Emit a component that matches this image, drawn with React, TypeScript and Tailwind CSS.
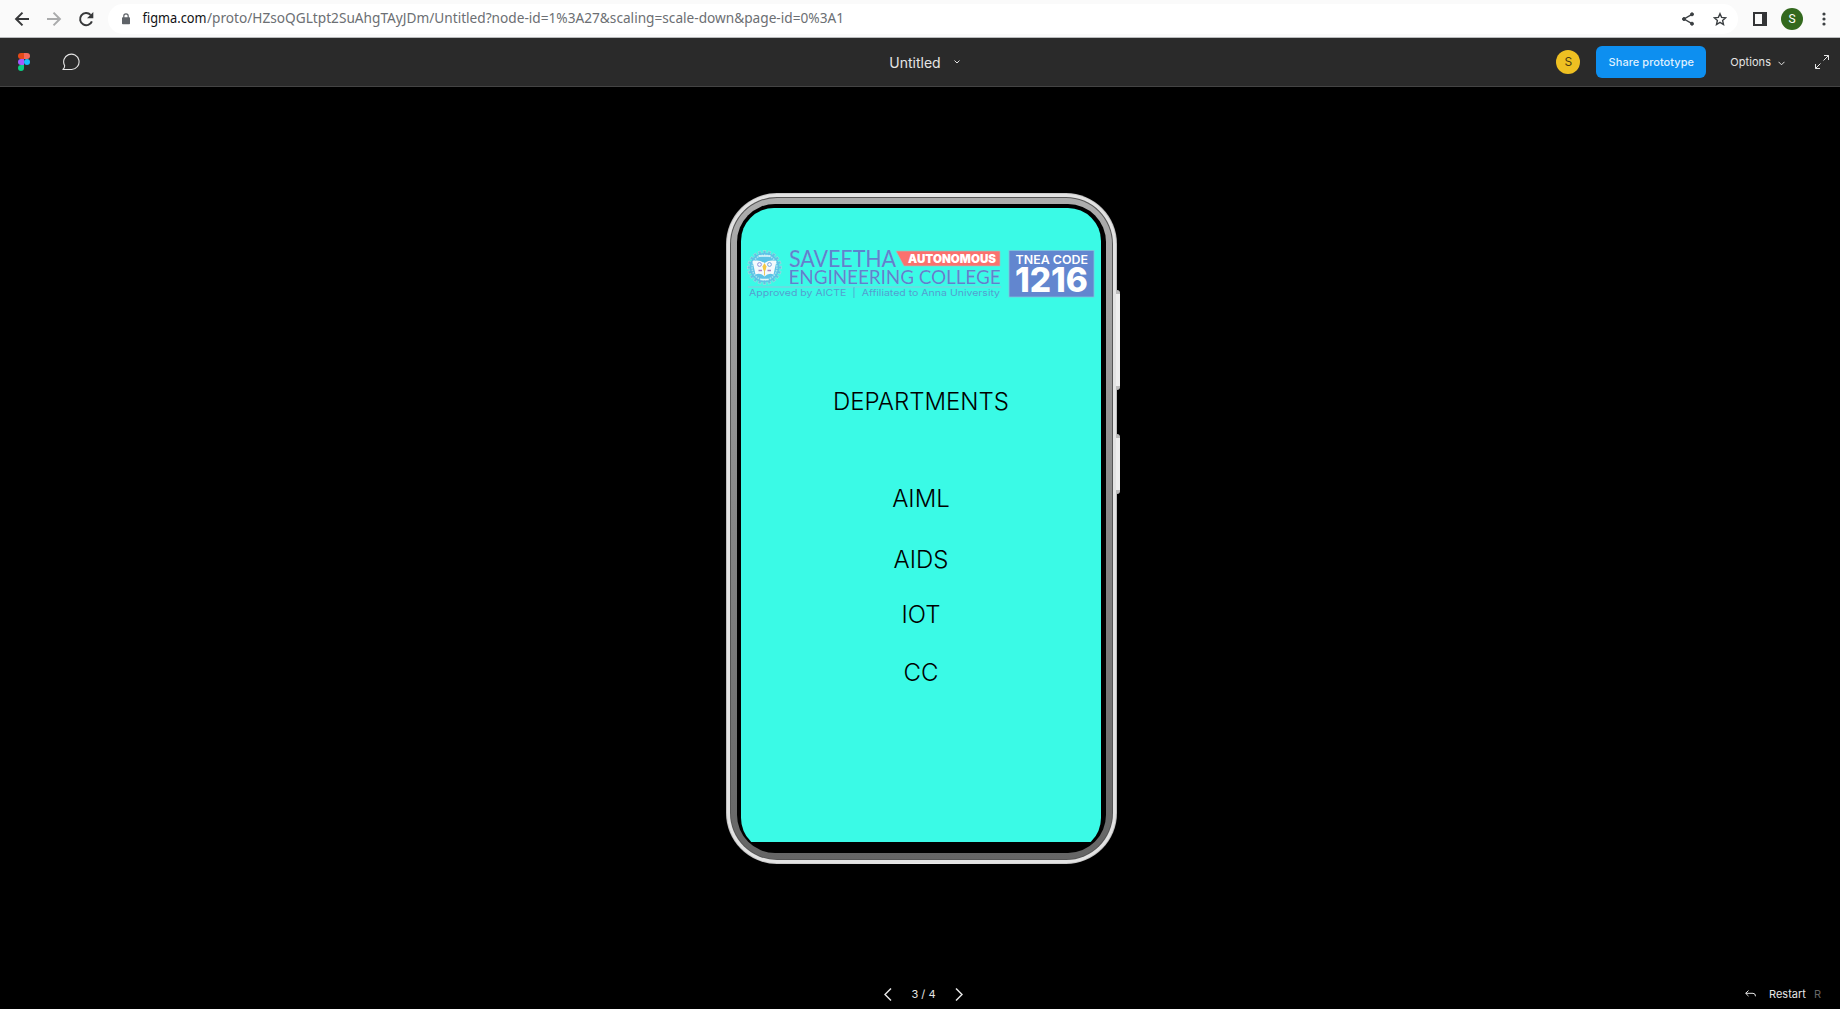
import React from "react";

const emblemTeeth = Array.from({ length: 20 }, (_, i) => i * 18);

function BrowserBar() {
  return (
    <header className="flex h-[38px] items-center border-b border-[#b9bbbd] bg-[#fafafa] text-[#3c4043]">
      <svg className="ml-[14px] h-4 w-4 shrink-0" viewBox="0 0 16 16" fill="none" stroke="#37383a" strokeWidth="2">
        <path d="M15 8H2.5M8.5 1.6 2.1 8l6.4 6.4" />
      </svg>
      <svg className="ml-4 h-4 w-4 shrink-0" viewBox="0 0 16 16" fill="none" stroke="#aaabac" strokeWidth="2">
        <path d="M1 8h12.5M7.5 1.6 13.9 8l-6.4 6.4" />
      </svg>
      <svg className="ml-4 h-4 w-4 shrink-0" viewBox="0 0 16 16" fill="none">
        <path d="M13.9 10.3A6.1 6.1 0 1 1 12.6 3.9" stroke="#37383a" strokeWidth="2" />
        <path d="M15.3 1v6.3H9z" fill="#37383a" />
      </svg>
      <div className="ml-[14px] flex h-[30px] w-[1630px] shrink-0 items-center rounded-full bg-white">
        <svg className="ml-[14px] h-3 w-2 shrink-0" viewBox="0 0 8 12">
          <path d="M1.8 5V3.1a2.2 2.2 0 0 1 4.4 0V5" fill="none" stroke="#5f6368" strokeWidth="1.2" />
          <rect x="0" y="4.3" width="8" height="7" rx=".8" fill="#5f6368" />
        </svg>
        <svg className="ml-3 h-[30px] w-[704px] shrink-0" viewBox="0 0 704 30" fontFamily="'Noto Sans', sans-serif" fontSize="14">
          <text x="0.5" y="19" fill="#111214" textLength="64" lengthAdjust="spacingAndGlyphs">figma.com</text>
          <text x="65" y="19" fill="#6c6f73" textLength="637" lengthAdjust="spacingAndGlyphs">
            /proto/HZsoQGLtpt2SuAhgTAyJDm/Untitled?node-id=1%3A27&amp;scaling=scale-down&amp;page-id=0%3A1
          </text>
        </svg>
        <svg className="ml-auto h-[14px] w-3 shrink-0" viewBox="0 0 12 14" fill="#3c4043" stroke="#3c4043">
          <path d="M10 2.3 2 7l8 4.7" fill="none" strokeWidth="1.4" />
          <circle cx="10" cy="2.3" r="1.5" />
          <circle cx="2" cy="7" r="1.5" />
          <circle cx="10" cy="11.7" r="1.5" />
        </svg>
        <svg className="mr-[11px] ml-[19px] h-[14px] w-[14px] shrink-0" viewBox="0 0 14 14" fill="none" stroke="#3c4043" strokeWidth="1.4">
          <path d="m7 1.7 1.6 3.7 4.1.4-3.1 2.7.9 4L7 10.4l-3.5 2.1.9-4-3.1-2.7 4.1-.4z" />
        </svg>
      </div>
      <svg className="ml-[15px] h-[14px] w-[14px] shrink-0" viewBox="0 0 14 14">
        <path d="M0 0h14v14H0zM2 2v10h7V2z" fill="#333436" fillRule="evenodd" />
      </svg>
      <span className="ml-[14px] flex h-[22px] w-[22px] shrink-0 items-center justify-center rounded-full bg-[#33691e] font-['Roboto',sans-serif] text-[12px] text-white">
        S
      </span>
      <svg className="ml-[19px] h-[14px] w-1 shrink-0" viewBox="0 0 4 14" fill="#3c4043">
        <circle cx="2" cy="2" r="1.6" />
        <circle cx="2" cy="7" r="1.6" />
        <circle cx="2" cy="12" r="1.6" />
      </svg>
    </header>
  );
}

function PrototypeBar() {
  return (
    <div className="grid h-[49px] grid-cols-[1fr_auto_1fr] items-center border-b border-[#444] bg-[#2a2a2a] text-[#e5e5e5]">
      <div className="flex items-center">
        <svg className="ml-[18px] h-[18px] w-3" viewBox="0 0 12 18">
          <path d="M3 0h3v6H3a3 3 0 0 1 0-6z" fill="#e64a19" />
          <path d="M6 0h3a3 3 0 0 1 0 6H6z" fill="#f4695c" />
          <path d="M3 6h3v6H3a3 3 0 0 1 0-6z" fill="#a259ff" />
          <circle cx="9" cy="9" r="3" fill="#1abcfe" />
          <path d="M3 12h3v3a3 3 0 1 1-3-3z" fill="#0acf83" />
        </svg>
        <svg className="ml-8 h-[18px] w-[18px]" viewBox="0 0 18 18" fill="none" stroke="#e5e5e5" strokeWidth="1.1">
          <path d="M.9 16.5c1-.8 1.7-2.2 1.8-3.8A7.7 7.7 0 1 1 9.7 16.5z" strokeLinejoin="round" />
        </svg>
      </div>
      <div className="flex items-center pt-px pl-[9px]">
        <span className="font-['Inter',sans-serif] text-[14px] leading-5">Untitled</span>
        <svg className="mb-[2px] ml-[13px] h-1 w-[6px]" viewBox="0 0 6 4" fill="none" stroke="#e5e5e5">
          <path d="m.5.5 2.5 2.5L5.5.5" />
        </svg>
      </div>
      <div className="flex items-center justify-end font-['Inter',sans-serif] text-[11px]">
        <span className="flex h-6 w-6 items-center justify-center rounded-full bg-[#eec022] text-[12px] text-[#4a3b10]">
          S
        </span>
        <button className="ml-4 h-8 w-[110px] rounded-md bg-[#0d8ff0] font-medium tracking-[0.05px] text-[#dff0ff]">
          Share prototype
        </button>
        <span className="ml-[24px] tracking-[0.05px]">Options</span>
        <svg className="mt-[3px] ml-[7px] h-[5px] w-[7px]" viewBox="0 0 7 5" fill="none" stroke="#e5e5e5">
          <path d="m.5.8 3 3 3-3" />
        </svg>
        <svg className="mr-[11px] ml-[30px] h-[14px] w-[14px]" viewBox="0 0 14 14" fill="none" stroke="#e5e5e5">
          <path d="M9 .5h4.500V5M13.500 .5 8.500 5.500M5 13.500H.5V9M.5 13.500l5-5" />
        </svg>
      </div>
    </div>
  );
}

function CollegeBanner() {
  return (
    <svg className="block h-[50px] w-[360px] font-normal" viewBox="741 249 360 50">
      <g transform="translate(764.5 267.5)">
        {emblemTeeth.map((angle) => (
          <rect key={angle} x="-1.4" y="-17" width="2.8" height="5" fill="#5fc3e4" stroke="#a9dcdc" strokeWidth=".6" transform={`rotate(${angle})`} />
        ))}
        <circle r="14.8" fill="#5cc3e6" />
        <circle r="12.4" fill="none" stroke="#a5e2ee" strokeWidth="1.6" strokeDasharray="1.5 1" />
        <path d="M-12-6.5Q-5-8 0-4.500 5-8 12-6.500L9 7Q4 5 0 9-4 5-9 7z" fill="#f4fafc" />
        <path d="M0-3.500V8" stroke="#e7c860" strokeWidth="1" />
        <circle cx="-5" cy="-3" r="1.9" fill="none" stroke="#8f93dc" />
        <circle cx="5" cy="-3" r="1.9" fill="none" stroke="#77a5dc" />
        <path d="M-6 3h3.500M3 3h3.500" stroke="#a783c7" strokeWidth="1.500" />
        <path d="M0-4.500 2-1 1 3h-2l-1-4z" fill="#f5c945" />
        <path d="M-6-11.500H6M-4 12H4" stroke="#dcf7fa" strokeWidth="1.500" />
      </g>
      <g className="[filter:drop-shadow(0_0_0.6px_#b9d9e8)]" fill="#5b85cd" stroke="#5b85cd" fontFamily="Lato, sans-serif">
        <text x="789" y="267.200" fontSize="22.500" strokeWidth=".2" textLength="107" lengthAdjust="spacingAndGlyphs">SAVEETHA</text>
        <text x="788.500" y="283.500" fontSize="18.500" strokeWidth=".1" textLength="212" lengthAdjust="spacingAndGlyphs">ENGINEERING COLLEGE</text>
      </g>
      <path d="M748 287H1001" stroke="#8fc6dc" />
      <text x="749" y="296.300" fontSize="9" fontFamily="Inter, sans-serif" fill="#549fd0" textLength="251" lengthAdjust="spacingAndGlyphs">
        Approved by AICTE&nbsp; |&nbsp; Affiliated to Anna University
      </text>
      <path d="M896 251h104v15H904z" fill="#fa716e" stroke="#a5bebb" strokeWidth=".7" />
      <text x="908" y="263" fontSize="12" fontWeight="900" fontFamily="Inter, sans-serif" fill="#fff" textLength="88" lengthAdjust="spacingAndGlyphs">AUTONOMOUS</text>
      <rect x="1009" y="250.500" width="85" height="46.500" fill="#6286cf" stroke="#83c3dc" strokeWidth=".8" />
      <g fill="#fff" fontFamily="Inter, sans-serif">
        <text x="1015.500" y="263.500" fontSize="12" fontWeight="600" textLength="72.500" lengthAdjust="spacingAndGlyphs">TNEA CODE</text>
        <text x="1015" y="292.300" fontSize="34" fontWeight="800" textLength="73" lengthAdjust="spacingAndGlyphs">1216</text>
      </g>
    </svg>
  );
}

function Phone() {
  return (
    <div className="relative h-[671px] w-[391px] rounded-[51px] bg-linear-to-r from-[#bdbdbd] via-[#ededed] to-[#bdbdbd] p-px">
      <span className="absolute top-[97px] left-[390px] h-[100px] w-1 rounded-r-[3px] border-y-4 border-[#bcbcbc] bg-[#eeeeee]" />
      <span className="absolute top-[241px] left-[390px] h-[60px] w-1 rounded-r-[3px] border-y-4 border-[#bcbcbc] bg-[#eeeeee]" />
      <div className="h-full rounded-[50px] bg-[#e3e3e3] p-[3px]">
        <div className="h-full rounded-[47px] bg-[#555] p-px">
          <div className="h-full rounded-[46px] bg-linear-to-b from-[#adadad] via-[#868686] to-[#656565] p-[6px]">
            <div className="h-full rounded-[38px] bg-black pt-1 pr-[5px] pl-1">
              <div className="h-[643px] overflow-hidden rounded-[33px]">
                <div className="h-[634px] bg-[#3afae6] pt-[41px] text-center font-['Inter',sans-serif] text-[24px] leading-[30px] font-light text-black">
                  <CollegeBanner />
                  <h1 className="mt-[88px]">DEPARTMENTS</h1>
                  <p className="mt-[67px]">AIML</p>
                  <p className="mt-[31px]">AIDS</p>
                  <p className="mt-[25px]">IOT</p>
                  <p className="mt-[28px]">CC</p>
                </div>
              </div>
            </div>
          </div>
        </div>
      </div>
    </div>
  );
}

function FooterBar() {
  return (
    <footer className="grid h-[30px] grid-cols-[1fr_auto_1fr] items-center font-['Inter',sans-serif] text-[11px] text-[#e5e5e5]">
      <span />
      <div className="flex items-center pl-[7px]">
        <svg className="h-[13px] w-2" viewBox="0 0 8 13" fill="none" stroke="#e5e5e5" strokeWidth="1.500">
          <path d="M7 .5 1 6.500l6 6" />
        </svg>
        <span className="w-[63px] text-center">3 / 4</span>
        <svg className="h-[13px] w-2" viewBox="0 0 8 13" fill="none" stroke="#e5e5e5" strokeWidth="1.500">
          <path d="m1 .5 6 6-6 6" />
        </svg>
      </div>
      <div className="flex items-center justify-end pr-[19px]">
        <svg className="mr-[13px] h-2 w-[11px]" viewBox="0 0 11 8" fill="none" stroke="#e5e5e5">
          <path d="M3.500 .5.700 3.300l2.800 2.800M.700 3.300H8q2.500 0 2.500 3" />
        </svg>
        <span>Restart</span>
        <span className="ml-2 text-[#666]">R</span>
      </div>
    </footer>
  );
}

export default function App() {
  return (
    <div className="flex h-[1009px] w-[1840px] flex-col overflow-hidden bg-black">
      <BrowserBar />
      <PrototypeBar />
      <main className="flex flex-1 flex-col items-center pt-[106px]">
        <div className="pl-[3px]">
          <Phone />
        </div>
        <div className="mt-auto w-full">
          <FooterBar />
        </div>
      </main>
    </div>
  );
}
